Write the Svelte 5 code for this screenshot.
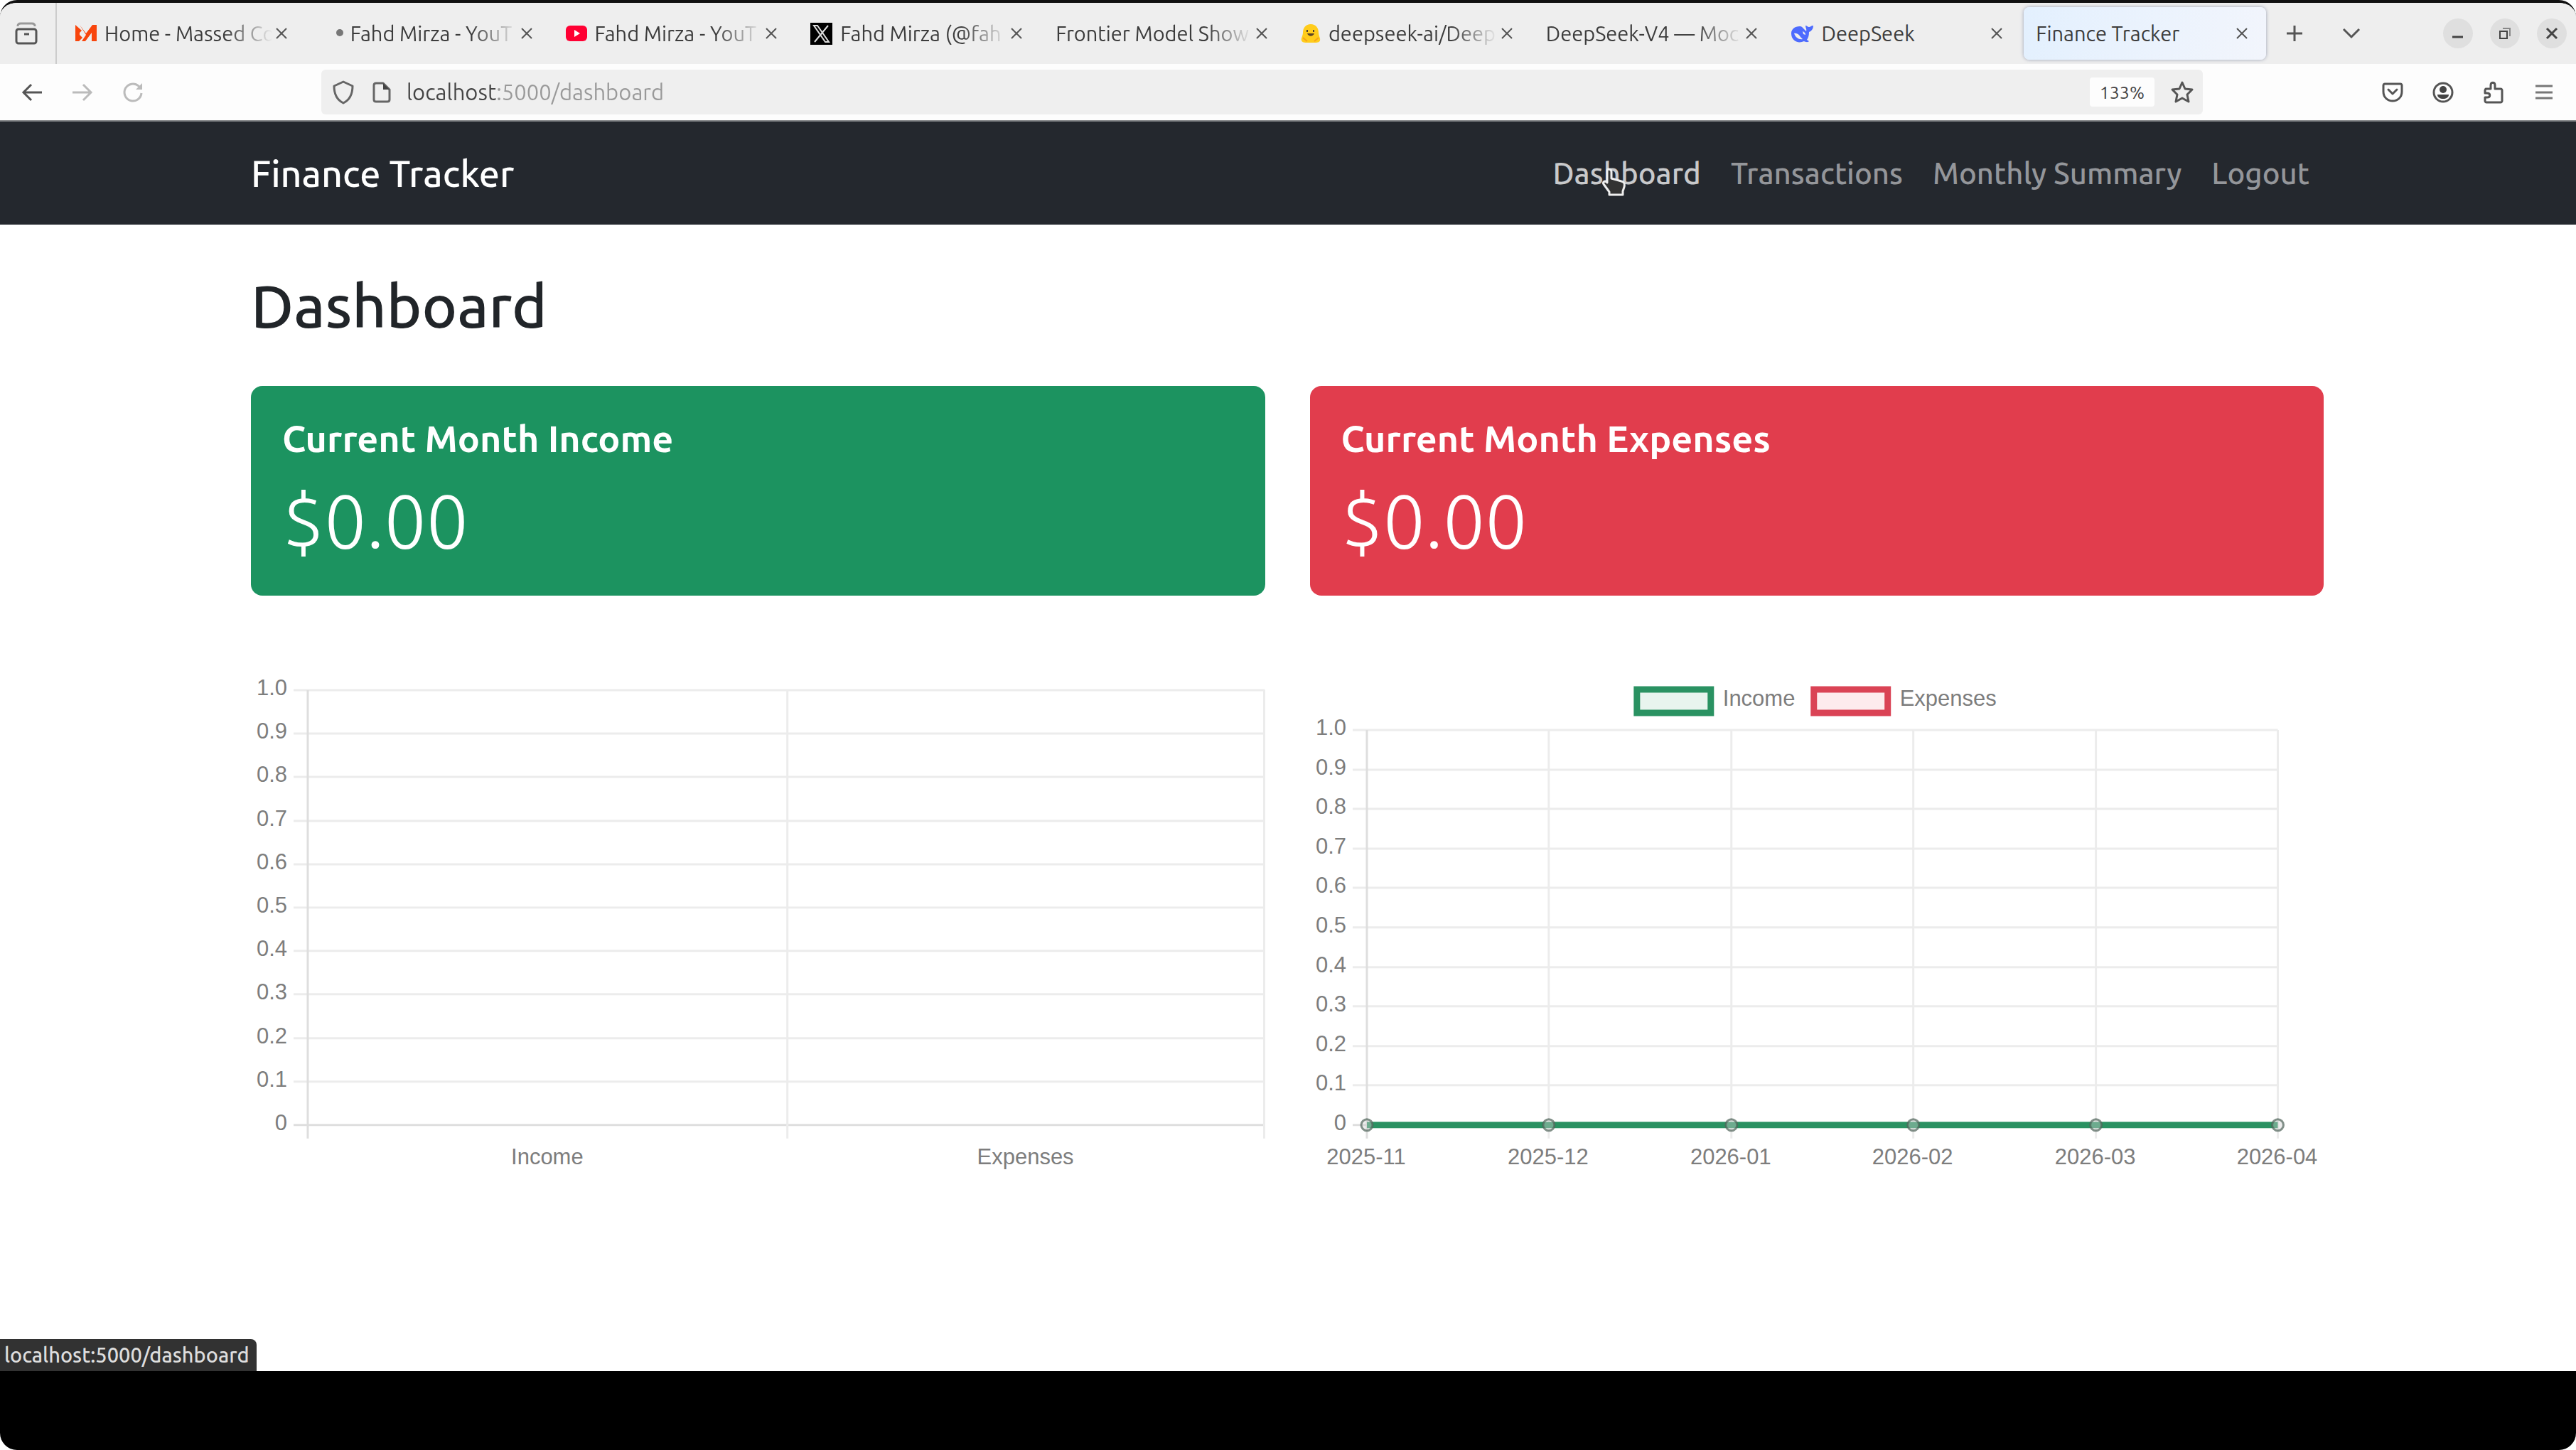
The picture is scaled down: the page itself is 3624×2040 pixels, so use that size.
<script lang="ts">
	// Browser window with the finance tracker dashboard open.

	interface Tab {
		title: string;
		icon: string;
		active?: boolean;
	}

	const tabs: Tab[] = [
		{ title: 'Home - Massed Co', icon: 'massed' },
		{ title: 'Fahd Mirza - YouT', icon: 'dot' },
		{ title: 'Fahd Mirza - YouT', icon: 'youtube' },
		{ title: 'Fahd Mirza (@fah', icon: 'x' },
		{ title: 'Frontier Model Show', icon: '' },
		{ title: 'deepseek-ai/Deep', icon: 'hugging' },
		{ title: 'DeepSeek-V4 — Moc', icon: '' },
		{ title: 'DeepSeek', icon: 'deepseek' },
		{ title: 'Finance Tracker', icon: '', active: true }
	];

	const links = ['Dashboard', 'Transactions', 'Monthly Summary', 'Logout'];
	const ticks = ['1.0', '0.9', '0.8', '0.7', '0.6', '0.5', '0.4', '0.3', '0.2', '0.1', '0'];
	const months = ['2025-11', '2025-12', '2026-01', '2026-02', '2026-03', '2026-04'];

	let url = $state('localhost:5000/dashboard');

	// Vertical position of a tick between the top and the bottom of a plot
	const tickY = (i: number, top: number) => Math.round(top + (i * (641 - top)) / 10);
	const monthX = (i: number) => Math.round(80 + (i * 1282) / 5);
</script>

{#snippet closeIcon()}
	<svg width="18" height="18" viewBox="0 0 18 18" fill="none" stroke="#555" stroke-width="2"><path d="M2 2l14 14M16 2L2 16" /></svg>
{/snippet}

<div class="window">
	<header class="tab-bar">
		<button class="history" aria-label="Recent browsing">
			<svg width="34" height="34" viewBox="0 0 34 34" fill="none" stroke="#555" stroke-width="3">
				<path d="M5 7c0-3 1-4 4-4h16c3 0 4 1 4 4" stroke="#999" />
				<rect x="3" y="11" width="28" height="20" rx="3" />
				<path d="M14 18h7" />
			</svg>
		</button>
		<div class="tabs">
			{#each tabs as tab}
				<div class="tab" class:active={tab.active}>
					{#if tab.icon === 'massed'}
						<svg class="favicon" width="30" height="30" viewBox="0 0 30 30" fill="#f8450c">
							<path d="M0 3l9 8-3 3v3l4 4-5 5H0zM6 3l9 12L24 3h6v23h-7V14l-9 12H9l6-9z" />
						</svg>
					{:else if tab.icon === 'dot'}
						<svg class="favicon dot" width="12" height="30" viewBox="0 0 12 30"><circle cx="6" cy="14" r="5" fill="#777" /></svg>
					{:else if tab.icon === 'youtube'}
						<svg class="favicon" width="30" height="30" viewBox="0 0 30 30">
							<rect y="4" width="30" height="22" rx="6" fill="#ff0033" />
							<path d="M12 10l8 5-8 5z" fill="#fff" />
						</svg>
					{:else if tab.icon === 'x'}
						<svg class="favicon" width="31" height="31" viewBox="0 0 31 31">
							<rect width="31" height="31" />
							<path d="M5 4h5l16 23h-5zM25 4L6 27" fill="none" stroke="#ddd" stroke-width="2" />
						</svg>
					{:else if tab.icon === 'hugging'}
						<svg class="favicon" width="28" height="30" viewBox="0 0 28 30">
							<path d="M14 2c7 0 11 5 11 12 0 4 3 8 2 11-1 4-9 3-13 3S2 29 1 25c-1-3 2-7 2-11C3 7 7 2 14 2z" fill="#ffcc1b" />
							<path d="M9 10v3M18 10v3" stroke="#4a4030" stroke-width="2" />
							<path d="M9 15c2 5 8 5 10 0z" fill="#5c4526" />
							<path d="M3 21l6 5M25 21l-6 5" stroke="#f5a31c" stroke-width="2" />
						</svg>
					{:else if tab.icon === 'deepseek'}
						<svg class="favicon" width="32" height="30" viewBox="0 0 32 30" fill="#4d6bfe">
							<path d="M13 5c3 0 4 2 6 4l3 3c1-3-1-5-1-8 2 0 3 2 5 2s3-2 6-2c0 5-3 8-6 9 0 5-1 8-3 11l3 2c-2 2-5 1-7 0C10 30 1 25 1 15 1 9 6 5 13 5z" />
							<path d="M5 15c4-1 7 2 9 5l3 3c-5 1-10-2-12-8zM17 12c3 1 4 3 4 5l-3-1z" fill="#eee" />
						</svg>
					{/if}
					<button class="tab-title" class:fading={!tab.active && tab.title !== 'DeepSeek'}>{tab.title}</button>
					<button class="tab-close" aria-label="Close tab">{@render closeIcon()}</button>
				</div>
			{/each}
		</div>
		<button class="new-tab" aria-label="New tab">
			<svg width="26" height="26" viewBox="0 0 26 26" stroke="#555" stroke-width="3"><path d="M13 2v22M2 13h22" /></svg>
		</button>
		<button class="all-tabs" aria-label="List all tabs">
			<svg width="28" height="18" viewBox="0 0 28 18" fill="none" stroke="#555" stroke-width="3"><path d="M3 3l11 11L25 3" /></svg>
		</button>
		<div class="window-controls">
			<button aria-label="Minimize">
				<svg width="42" height="42" viewBox="0 0 42 42" stroke="#444" stroke-width="3"><path d="M13 26h15" /></svg>
			</button>
			<button aria-label="Restore">
				<svg width="42" height="42" viewBox="0 0 42 42" fill="none" stroke="#444" stroke-width="2">
					<rect x="14" y="18" width="10" height="10" />
					<path d="M18 14h10v11" stroke="#888" />
				</svg>
			</button>
			<button aria-label="Close window">
				<svg width="42" height="42" viewBox="0 0 42 42" stroke="#444" stroke-width="3"><path d="M14 14l14 14M28 14L14 28" /></svg>
			</button>
		</div>
	</header>

	<div class="toolbar">
		<div class="history-buttons">
			<button aria-label="Back">
				<svg width="30" height="30" viewBox="0 0 30 30" fill="none" stroke="#555" stroke-width="3"><path d="M29 15H3M14 4L3 15l11 11" /></svg>
			</button>
			<button aria-label="Forward">
				<svg width="30" height="30" viewBox="0 0 30 30" fill="none" stroke="#bbb" stroke-width="3"><path d="M1 15h26M16 4l11 11-11 11" /></svg>
			</button>
			<button aria-label="Reload">
				<svg width="30" height="30" viewBox="0 0 30 30" fill="none" stroke="#bbb" stroke-width="3">
					<path d="M27 16a12 12 0 1 1-4-10l4 4" />
					<path d="M28 2v9h-9z" fill="#bbb" stroke="none" />
				</svg>
			</button>
		</div>
		<div class="url-bar">
			<svg width="30" height="34" viewBox="0 0 30 34" fill="none" stroke="#666" stroke-width="3"><path d="M15 2l13 6c0 10-3 19-13 24C5 27 2 18 2 8z" stroke-linejoin="round" /></svg>
			<svg class="page-icon" width="26" height="30" viewBox="0 0 26 30" fill="none" stroke="#666" stroke-width="3">
				<path d="M15 2H5c-2 0-3 1-3 3v20c0 2 1 3 3 3h16c2 0 3-1 3-3V11z" stroke-linejoin="round" />
				<path d="M15 2v9h9z" fill="#444" stroke="none" />
			</svg>
			<input type="text" aria-label="Address" bind:value={url} />
			<button class="zoom">133%</button>
			<button class="star" aria-label="Bookmark this page">
				<svg width="34" height="34" viewBox="0 0 34 34" fill="none" stroke="#555" stroke-width="3" stroke-linejoin="round">
					<path d="M17 3l4 9 10 1-7 7 2 10-9-5-9 5 2-10-7-7 10-1z" />
				</svg>
			</button>
		</div>
		<div class="toolbar-icons">
			<button aria-label="Save to Pocket">
				<svg width="30" height="30" viewBox="0 0 30 30" fill="none" stroke="#555" stroke-width="3" stroke-linejoin="round">
					<path d="M4 3h22c1 0 2 1 2 2v9c0 8-6 13-13 13S2 22 2 14V5c0-1 1-2 2-2z" />
					<path d="M9 11l6 6 6-6" stroke-linecap="round" />
				</svg>
			</button>
			<button aria-label="Account">
				<svg width="30" height="30" viewBox="0 0 30 30">
					<circle cx="15" cy="15" r="13" fill="none" stroke="#555" stroke-width="3" />
					<circle cx="15" cy="11" r="5" fill="#444" />
					<path d="M7 18h16c0 4-4 6-8 6s-8-2-8-6z" fill="#444" />
				</svg>
			</button>
			<button aria-label="Extensions">
				<svg width="30" height="32" viewBox="0 0 30 32" fill="none" stroke="#555" stroke-width="3" stroke-linejoin="round">
					<path d="M4 11h7V6c0-5 6-5 6 0v5h8c1 0 2 1 2 2v15c0 1-1 2-2 2H5c-1 0-2-1-2-2v-5h3c5 0 5-6 0-6H3v-4z" />
				</svg>
			</button>
			<button aria-label="Application menu">
				<svg width="30" height="30" viewBox="0 0 30 30" stroke="#777" stroke-width="3"><path d="M3 6h24M3 15h24M3 23h24" /></svg>
			</button>
		</div>
	</div>

	<div class="page">
		<nav class="navbar">
			<div class="container nav-row">
				<a class="brand" href="#dashboard">Finance Tracker</a>
				<div class="nav-links">
					{#each links as link, i}
						<a href="#{link.toLowerCase().replace(' ', '-')}" class:current={i === 0}>
							{link}
							{#if i === 0}
								<svg class="pointer" width="34" height="42" viewBox="0 0 34 42" stroke="#eee" stroke-width="3" stroke-linejoin="round">
									<path d="M10 3c3 0 4 2 4 4v9l14 4c4 1 5 3 4 8l-2 6v5H11v-4L3 24c-2-3 2-5 4-3l1 1V6c0-2 1-3 2-3z" fill="#333" />
								</svg>
							{/if}
						</a>
					{/each}
				</div>
			</div>
		</nav>

		<main class="container">
			<h1>Dashboard</h1>
			<div class="row">
				<section class="card income">
					<h2>Current Month Income</h2>
					<p>$0.00</p>
				</section>
				<section class="card expenses">
					<h2>Current Month Expenses</h2>
					<p>$0.00</p>
				</section>
			</div>

			<div class="row charts">
				<svg viewBox="0 0 1427 714" role="img" aria-label="Income and expenses this month">
					<g class="grid">
						{#each ticks as tick, i}
							<path d="M60 {tickY(i, 29)}H1427" class:axis={tick === '0'} />
						{/each}
						<path class="axis" d="M80 29V660" />
						<path d="M755 29V660M1426 29V660" />
					</g>
					{#each ticks as tick, i}
						<text class="tick-y" x="51" y={tickY(i, 29) + 7}>{tick}</text>
					{/each}
					<text class="tick-x" x="417" y="696">Income</text>
					<text class="tick-x" x="1090" y="696">Expenses</text>
				</svg>

				<svg viewBox="0 0 1427 714" role="img" aria-label="Income and expenses by month">
					<rect class="line-income key-income" x="460" y="28" width="104" height="33" />
					<text x="581" y="51">Income</text>
					<rect class="line-expenses key-expenses" x="709" y="28" width="104" height="33" />
					<text x="830" y="51">Expenses</text>
					<g class="grid">
						{#each ticks as tick, i}
							<path d="M60 {tickY(i, 85)}H1362" class:axis={tick === '0'} />
						{/each}
						{#each months as month, i}
							<path d="M{monthX(i)} 85V660" class:axis={i === 0} />
						{/each}
					</g>
					{#each ticks as tick, i}
						<text class="tick-y" x="51" y={tickY(i, 85) + 7}>{tick}</text>
					{/each}
					<path class="line-income" d="M80 641H1362" />
					{#each months as month, i}
						<circle class="point" cx={monthX(i)} cy="641" r="8" />
						<text class="tick-x" x={monthX(i) - 1} y="696">{month}</text>
					{/each}
				</svg>
			</div>
		</main>

		<div class="status">localhost:5000/dashboard</div>
	</div>

	<footer class="letterbox"></footer>
</div>

<style>
	:global(body) {
		margin: 0;
		background: #fff;
	}

	.window {
		display: flex;
		flex-direction: column;
		box-sizing: border-box;
		min-height: 100vh;
		border-top: 4px solid #111;
		border-radius: 24px;
		overflow: hidden;
		background: #fff;
		font-family: Ubuntu, 'Noto Sans', sans-serif;
		color: #212529;
	}

	button {
		display: flex;
		align-items: center;
		justify-content: center;
		padding: 0;
		border: none;
		background: none;
		font: inherit;
		color: inherit;
		cursor: pointer;
	}

	svg {
		display: block;
		flex: none;
	}

	/* Tab bar */
	.tab-bar {
		display: flex;
		align-items: center;
		height: 86px;
		background: #eee;
		font-size: 29px;
		color: #3c3c3c;
	}

	.history {
		width: 80px;
		height: 86px;
		box-sizing: border-box;
		padding-right: 4px;
		border-right: 2px solid #ccc;
	}

	.tabs {
		flex: 1;
		min-width: 0;
		display: flex;
		gap: 4px;
		margin-left: 9px;
	}

	.tab {
		flex: 1 1 0;
		min-width: 0;
		display: flex;
		align-items: center;
		height: 74px;
		box-sizing: border-box;
		padding: 0 25px 0 17px;
		border-radius: 8px;
	}

	.tab.active {
		background: linear-gradient(100deg, #e3f0fe, #f2f5fc);
		box-shadow: 0 0 5px #9aa0b4;
	}

	.favicon {
		margin-right: 11px;
	}

	.favicon.dot {
		margin: 0 9px 0 21px;
	}

	.tab-title {
		flex: 1;
		min-width: 0;
		justify-content: flex-start;
		white-space: nowrap;
	}

	/* Long titles fade out before the close button */
	.tab-title.fading {
		mask-image: linear-gradient(to right, #000 calc(100% - 64px), transparent);
	}

	.tab-close {
		margin-left: 4px;
	}

	.new-tab {
		width: 80px;
		height: 74px;
	}

	.all-tabs {
		width: 80px;
		height: 74px;
	}

	.window-controls {
		display: flex;
		gap: 24px;
		margin: 0 13px 0 89px;
	}

	.window-controls button {
		border-radius: 50%;
		background: #dfdfdf;
	}

	/* Toolbar */
	.toolbar {
		display: flex;
		align-items: center;
		height: 81px;
		box-sizing: border-box;
		padding: 0 30px;
		border-bottom: 2px solid #8a8c8e;
		background: #fdfdfd;
	}

	.history-buttons {
		display: flex;
		gap: 41px;
	}

	.url-bar {
		flex: 1;
		min-width: 0;
		display: flex;
		align-items: center;
		height: 63px;
		box-sizing: border-box;
		margin: 0 252px 0 250px;
		padding: 0 12px 0 16px;
		border-radius: 6px;
		background: #efefef;
	}

	.page-icon {
		margin: 0 22px 0 26px;
	}

	/* The host part of the address is darker than its path */
	.url-bar input {
		flex: 1;
		min-width: 0;
		padding: 0;
		border: none;
		outline: none;
		font: inherit;
		font-size: 31px;
		line-height: 40px;
		background: linear-gradient(to right, #444 127px, #999 127px);
		background-clip: text;
		-webkit-text-fill-color: transparent;
	}

	.zoom {
		height: 41px;
		padding: 0 14px;
		border-radius: 4px;
		background: #fdfdfd;
		font-size: 25px;
		color: #444;
	}

	.star {
		margin-left: 22px;
	}

	.toolbar-icons {
		display: flex;
		align-items: center;
		gap: 41px;
	}

	/* Page */
	.page {
		flex: 1;
		display: flex;
		flex-direction: column;
		position: relative;
	}

	.container {
		width: 100%;
		max-width: 3024px;
		box-sizing: border-box;
		margin: 0 auto;
		padding: 0 55px 0 53px;
	}

	.navbar {
		background: #24282e;
		font-weight: 500;
	}

	.nav-row {
		display: flex;
		align-items: center;
		justify-content: space-between;
		height: 145px;
	}

	.navbar a {
		color: #94969a;
		text-decoration: none;
	}

	.navbar .brand {
		font-size: 52px;
		color: #fff;
	}

	.nav-links {
		display: flex;
		gap: 42px;
		margin-right: 20px;
		font-size: 42px;
	}

	.nav-links a {
		position: relative;
	}

	.navbar .current {
		color: #c8c9cb;
	}

	.pointer {
		position: absolute;
		left: 68px;
		top: 15px;
	}

	h1 {
		margin: 68px 0 67px;
		font-size: 84px;
		font-weight: 500;
		line-height: 92px;
	}

	.row {
		display: grid;
		grid-template-columns: 1fr 1fr;
		gap: 63px;
	}

	.card {
		padding: 44px;
		border-radius: 16px;
		color: #fff;
	}

	.card.income {
		background: #1c9360;
	}

	.card.expenses {
		background: #e13d4d;
	}

	.card h2 {
		margin: 0 0 23px;
		font-size: 52px;
		font-weight: 600;
		line-height: 60px;
	}

	.card p {
		margin: 0;
		font-size: 105px;
		font-weight: 300;
		line-height: 124px;
	}

	/* Charts */
	.charts {
		margin-top: 104px;
	}

	.charts svg {
		width: 100%;
		font-family: 'Liberation Sans', Arial, sans-serif;
		font-size: 31px;
		fill: #7d7d7d;
	}

	.grid path {
		fill: none;
		stroke: #ececec;
		stroke-width: 3;
	}

	.grid .axis {
		stroke: #dedede;
	}

	.tick-y {
		text-anchor: end;
	}

	.tick-x {
		text-anchor: middle;
	}

	.line-income {
		stroke: #2a9262;
		stroke-width: 9;
	}

	.line-expenses {
		stroke: #da4355;
		stroke-width: 9;
	}

	.key-income {
		fill: #e8f4ee;
	}

	.key-expenses {
		fill: #fdebed;
	}

	.point {
		fill: rgba(210, 210, 210, 0.4);
		stroke: rgba(80, 100, 90, 0.7);
		stroke-width: 3;
	}

	.status {
		position: absolute;
		left: 0;
		bottom: 0;
		padding: 0 10px 0 6px;
		border-radius: 0 8px 0 0;
		background: #323232;
		font-size: 29px;
		font-weight: 500;
		line-height: 45px;
		color: #ddd;
	}

	.letterbox {
		height: 111px;
		background: #000;
	}
</style>
